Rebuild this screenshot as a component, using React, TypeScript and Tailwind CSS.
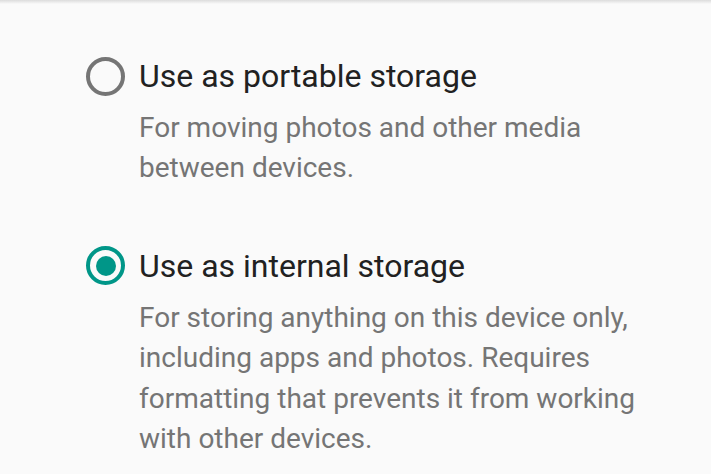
import React, { useState } from 'react';

type Option = {
  id: string;
  title: string;
  description: string;
};

const OPTIONS: Option[] = [
  {
    id: 'portable',
    title: 'Use as portable storage',
    description: 'For moving photos and other media between devices.',
  },
  {
    id: 'internal',
    title: 'Use as internal storage',
    description:
      'For storing anything on this device only, including apps and photos. Requires formatting that prevents it from working with other devices.',
  },
];

const Radio: React.FC<{ checked: boolean }> = ({ checked }) => (
  <span
    className={`flex h-[39px] w-[39px] shrink-0 items-center justify-center rounded-full border-[4px] ${
      checked ? 'border-[#009688]' : 'border-[#757575]'
    }`}
  >
    {checked && <span className="h-[20px] w-[20px] rounded-full bg-[#009688]" />}
  </span>
);

export default function App() {
  const [selected, setSelected] = useState('internal');

  return (
    <div
      className="relative h-[474px] w-[711px] overflow-hidden bg-[#fafafa]"
      style={{ fontFamily: 'Roboto, "Noto Sans", sans-serif' }}
    >
      {/* toolbar shadow */}
      <div className="h-[4px] w-full bg-gradient-to-b from-[#dcdcdc] to-[#fafafa]" />

      <div className="flex flex-col gap-[57px] pl-[86px] pr-[55px] pt-[52px]">
        {OPTIONS.map((opt) => (
          <div key={opt.id} onClick={() => setSelected(opt.id)} className="cursor-pointer">
            <div className="flex items-center gap-[14px]">
              <Radio checked={selected === opt.id} />
              <span className="text-[32px] leading-[40px] text-[#212121]">{opt.title}</span>
            </div>
            <p className="mt-[12px] pl-[53px] text-[28px] leading-[40.4px] text-[#757575]">
              {opt.description}
            </p>
          </div>
        ))}
      </div>
    </div>
  );
}
